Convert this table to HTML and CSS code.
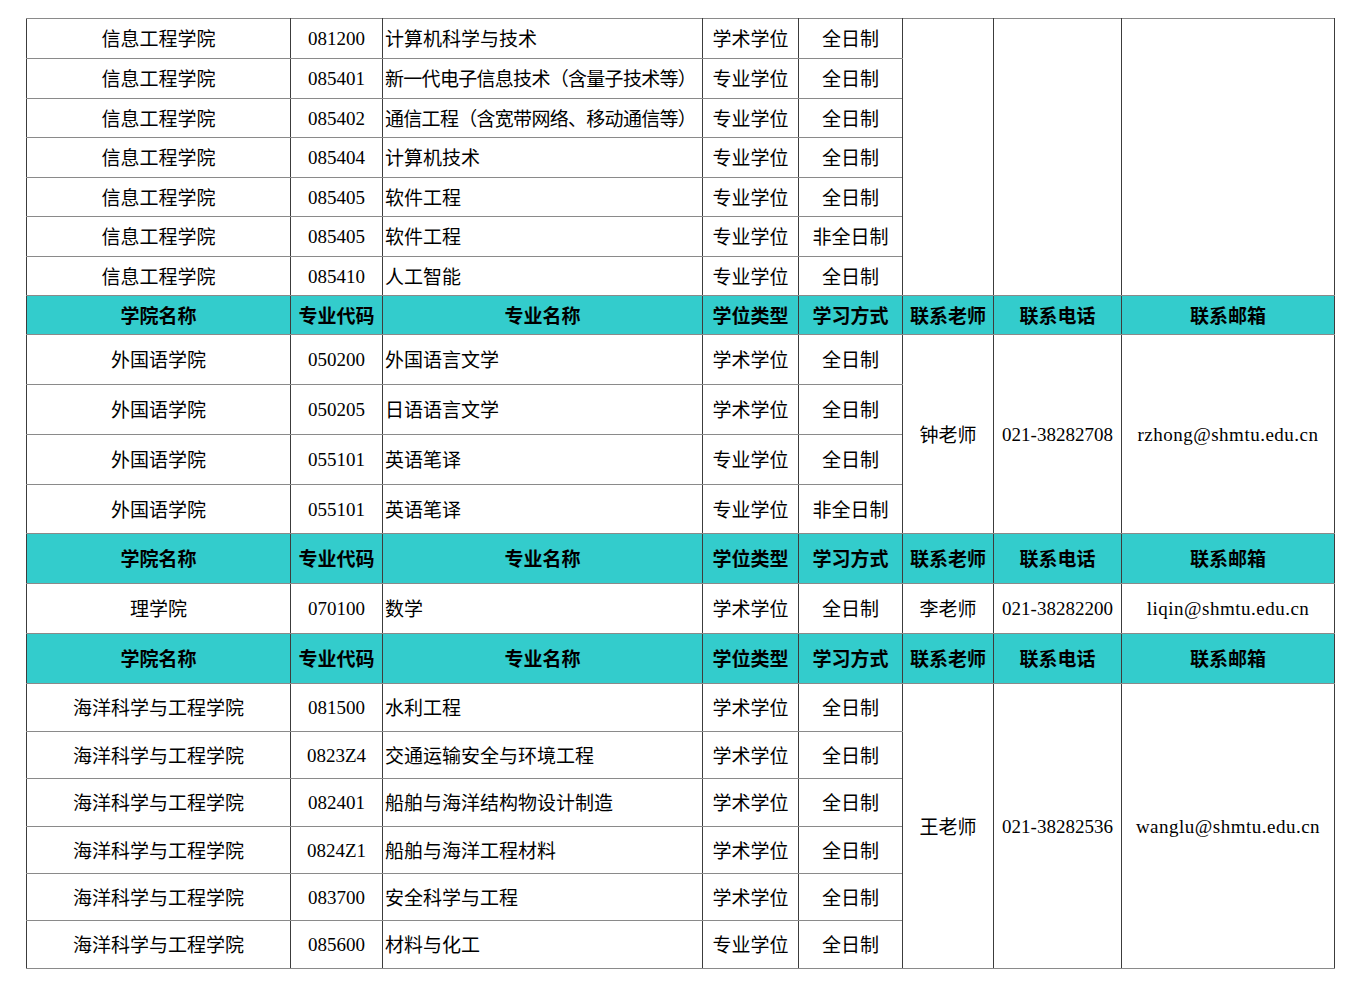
FILE: index.html
```html
<!DOCTYPE html>
<html lang="zh-CN">
<head>
<meta charset="utf-8">
<title>招生专业联系表</title>
<link rel="stylesheet" href="styles.css">
</head>
<body>
<div class="wrap">
<table class="grid">
  <colgroup>
    <col class="c1"><col class="c2"><col class="c3"><col class="c4"><col class="c5"><col class="c6"><col class="c7"><col class="c8">
  </colgroup>
  <tbody>
    <tr class="h40">
      <td>信息工程学院</td><td class="num">081200</td><td class="name">计算机科学与技术</td><td>学术学位</td><td>全日制</td>
      <td rowspan="7"></td><td rowspan="7"></td><td rowspan="7"></td>
    </tr>
    <tr class="h40"><td>信息工程学院</td><td class="num">085401</td><td class="name tight">新一代电子信息技术（含量子技术等）</td><td>专业学位</td><td>全日制</td></tr>
    <tr class="h39"><td>信息工程学院</td><td class="num">085402</td><td class="name tight">通信工程（含宽带网络、移动通信等）</td><td>专业学位</td><td>全日制</td></tr>
    <tr class="h40"><td>信息工程学院</td><td class="num">085404</td><td class="name">计算机技术</td><td>专业学位</td><td>全日制</td></tr>
    <tr class="h39"><td>信息工程学院</td><td class="num">085405</td><td class="name">软件工程</td><td>专业学位</td><td>全日制</td></tr>
    <tr class="h40"><td>信息工程学院</td><td class="num">085405</td><td class="name">软件工程</td><td>专业学位</td><td>非全日制</td></tr>
    <tr class="h39"><td>信息工程学院</td><td class="num">085410</td><td class="name">人工智能</td><td>专业学位</td><td>全日制</td></tr>

    <tr class="head h39"><td>学院名称</td><td>专业代码</td><td>专业名称</td><td>学位类型</td><td>学习方式</td><td>联系老师</td><td>联系电话</td><td>联系邮箱</td></tr>
    <tr class="h50">
      <td>外国语学院</td><td class="num">050200</td><td class="name">外国语言文学</td><td>学术学位</td><td>全日制</td>
      <td rowspan="4">钟老师</td><td rowspan="4" class="num">021-38282708</td><td rowspan="4" class="num mail">rzhong@shmtu.edu.cn</td>
    </tr>
    <tr class="h50"><td>外国语学院</td><td class="num">050205</td><td class="name">日语语言文学</td><td>学术学位</td><td>全日制</td></tr>
    <tr class="h50"><td>外国语学院</td><td class="num">055101</td><td class="name">英语笔译</td><td>专业学位</td><td>全日制</td></tr>
    <tr class="h49"><td>外国语学院</td><td class="num">055101</td><td class="name">英语笔译</td><td>专业学位</td><td>非全日制</td></tr>

    <tr class="head h50"><td>学院名称</td><td>专业代码</td><td>专业名称</td><td>学位类型</td><td>学习方式</td><td>联系老师</td><td>联系电话</td><td>联系邮箱</td></tr>
    <tr class="h50">
      <td>理学院</td><td class="num">070100</td><td class="name">数学</td><td>学术学位</td><td>全日制</td>
      <td>李老师</td><td class="num">021-38282200</td><td class="num mail">liqin@shmtu.edu.cn</td>
    </tr>

    <tr class="head h50"><td>学院名称</td><td>专业代码</td><td>专业名称</td><td>学位类型</td><td>学习方式</td><td>联系老师</td><td>联系电话</td><td>联系邮箱</td></tr>
    <tr class="h48">
      <td>海洋科学与工程学院</td><td class="num">081500</td><td class="name">水利工程</td><td>学术学位</td><td>全日制</td>
      <td rowspan="6">王老师</td><td rowspan="6" class="num">021-38282536</td><td rowspan="6" class="num mail">wanglu@shmtu.edu.cn</td>
    </tr>
    <tr class="h47"><td>海洋科学与工程学院</td><td class="num">0823Z4</td><td class="name">交通运输安全与环境工程</td><td>学术学位</td><td>全日制</td></tr>
    <tr class="h48"><td>海洋科学与工程学院</td><td class="num">082401</td><td class="name">船舶与海洋结构物设计制造</td><td>学术学位</td><td>全日制</td></tr>
    <tr class="h47"><td>海洋科学与工程学院</td><td class="num">0824Z1</td><td class="name">船舶与海洋工程材料</td><td>学术学位</td><td>全日制</td></tr>
    <tr class="h47"><td>海洋科学与工程学院</td><td class="num">083700</td><td class="name">安全科学与工程</td><td>学术学位</td><td>全日制</td></tr>
    <tr class="h48"><td>海洋科学与工程学院</td><td class="num">085600</td><td class="name">材料与化工</td><td>专业学位</td><td>全日制</td></tr>
  </tbody>
</table>
</div>
</body>
</html>
```

FILE: styles.css
```css
html, body {
  margin: 0;
  padding: 0;
  background: #ffffff;
}

.wrap {
  padding: 18px 0 0 26px;
}

.grid {
  border-collapse: collapse;
  table-layout: fixed;
  width: 1308px;
  font-family: "Noto Sans CJK SC", "Noto Sans", sans-serif;
  font-size: 19px;
  color: #000;
}

.c1 { width: 264px; }
.c2 { width: 92px; }
.c3 { width: 320px; }
.c4 { width: 96px; }
.c5 { width: 104px; }
.c6 { width: 91px; }
.c7 { width: 128px; }
.c8 { width: 213px; }

.grid td {
  border-top: 1px solid #8a8a8a;
  border-bottom: 1px solid #8a8a8a;
  border-left: 1px solid #3c3c3c;
  border-right: 1px solid #3c3c3c;
  padding: 0;
  text-align: center;
  vertical-align: middle;
  white-space: nowrap;
  line-height: 1.2;
}

.grid td.name {
  text-align: left;
  padding-left: 2px;
}

.grid td.tight {
  letter-spacing: -0.7px;
}

.grid td.num {
  font-family: "Liberation Serif", "Times New Roman", serif;
  font-size: 19px;
  padding-top: 2px;
}

.grid td.mail {
  letter-spacing: 0.5px;
}

.grid tr.head td {
  background: #33cccc;
  font-weight: 700;
  text-align: center;
  padding-left: 0;
  font-family: "Noto Sans CJK SC", "Noto Sans", sans-serif;
  font-size: 19px;
}

.h39 { height: 39px; }
.h40 { height: 40px; }
.h47 { height: 47px; }
.h48 { height: 48px; }
.h49 { height: 49px; }
.h50 { height: 50px; }
```
